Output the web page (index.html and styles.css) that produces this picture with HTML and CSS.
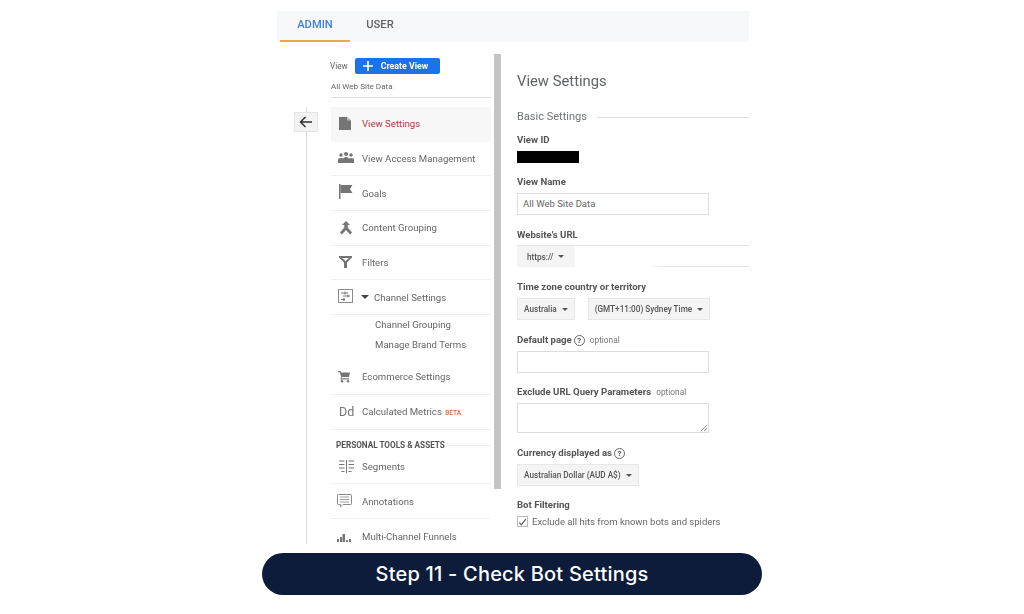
FILE: index.html
```html
<!DOCTYPE html>
<html lang="en">
<head>
<meta charset="utf-8">
<title>Step 11 - Check Bot Settings</title>
<link rel="stylesheet" href="styles.css">
</head>
<body>
<main class="page">
  <section class="shot">
    <header class="tabs">
      <div class="tab tab-active">ADMIN</div>
      <div class="tab">USER</div>
    </header>
    <div class="panes">
      <aside class="side">
        <div class="rail">
          <div class="back">
            <svg width="14" height="12" viewBox="0 0 14 12"><path d="M13 6H2M6.500 1 1.500 6l5 5" fill="none" stroke="#333" stroke-width="1.500"/></svg>
          </div>
        </div>
        <nav class="nav">
          <div class="view-head"><span>View</span><button class="create"><svg width="12" height="12" viewBox="0 0 12 12"><path d="M6 1v10M1 6h10" stroke="#fff" stroke-width="1.700"/></svg>Create View</button></div>
          <div class="view-name">All Web Site Data</div>
          <div class="row active">
            <svg class="ico" width="20" height="18" viewBox="0 0 20 18"><path d="M3 3h8l4 3.500V16H3z" fill="#757575"/><path d="M11 3v3.500h4z" fill="#bdbdbd"/></svg>
            <span>View Settings</span>
          </div>
          <div class="row">
            <svg class="ico" width="20" height="18" viewBox="0 0 20 18"><g fill="#757575"><circle cx="5" cy="6" r="1.700"/><circle cx="10" cy="5" r="2"/><circle cx="15" cy="6" r="1.700"/><path d="M2 14v-3q0-2 3-2t3 2v3zM7 14v-3.500q0-2.500 3-2.500t3 2.500V14zM12 14v-3q0-2 3-2t3 2v3z"/></g></svg>
            <span>View Access Management</span>
          </div>
          <div class="row">
            <svg class="ico" width="20" height="18" viewBox="0 0 20 18"><path d="M3 1h1.500v15H3z" fill="#757575"/><path d="M4.500 2h12L14 6l2.500 4h-12z" fill="#757575"/></svg>
            <span>Goals</span>
          </div>
          <div class="row">
            <svg class="ico" width="20" height="18" viewBox="0 0 20 18"><path d="M10 3 6 7h2.300v2.500L4 14.500 5.800 16.500l4.200-4.500 4.200 4.500 1.800-2-4.300-5V7H14z" fill="#757575"/></svg>
            <span>Content Grouping</span>
          </div>
          <div class="row">
            <svg class="ico" width="20" height="18" viewBox="0 0 20 18"><path d="M3 3h13v1.500l-5 5V15H8V9.500l-5-5z" fill="#757575"/><path d="M6 5h7L9.500 8z" fill="#fff"/></svg>
            <span>Filters</span>
          </div>
          <div class="row row-open">
            <svg class="ico" width="20" height="18" viewBox="0 0 20 18"><rect x="2.500" y="2.500" width="14" height="13" fill="#fff" stroke="#8a8a8a"/><path d="M5 6h7M7 9h7M5 12.500h4" stroke="#757575"/><path d="M9 4.500v3M12 7.500v3M8 11v3" stroke="#757575"/></svg>
            <span class="caret"></span>
            <span>Channel Settings</span>
          </div>
          <div class="subs">
            <div>Channel Grouping</div>
            <div>Manage Brand Terms</div>
          </div>
          <div class="row">
            <svg class="ico" width="20" height="18" viewBox="0 0 20 18"><path d="M2 4h2.500l.5 1.500h9l-1 4.500H6l-.5 1.200H13v1.300H4.300l.9-2.700-1.400-4.600H2z" fill="#757575"/><circle cx="6" cy="14.200" r="1.200" fill="#757575"/><circle cx="12" cy="14.200" r="1.200" fill="#757575"/></svg>
            <span>Ecommerce Settings</span>
          </div>
          <div class="row">
            <span class="dd">Dd</span>
            <span>Calculated Metrics <b class="beta">BETA</b></span>
          </div>
          <div class="group"><span>PERSONAL TOOLS &amp; ASSETS</span></div>
          <div class="row">
            <svg class="ico" width="20" height="18" viewBox="0 0 20 18"><path d="M10.500 3v13" stroke="#757575"/><path d="M3 4h5.500M3 7.500h5.500M3 11h5.500M5.500 14.500h3M12.500 4H18M12.500 7.500H18M12.500 11H18M12.500 14.500h3" stroke="#757575" stroke-width="1.100"/></svg>
            <span>Segments</span>
          </div>
          <div class="row">
            <svg class="ico" width="20" height="18" viewBox="0 0 20 18"><path d="M2.300 3.500h12.400a.8.8 0 0 1 .8.800v8.400a.8.8 0 0 1-.8.800H7l-2.500 2.500V13.500H2.300a.8.8 0 0 1-.8-.8V4.300a.8.8 0 0 1 .8-.8z" fill="#fff" stroke="#8a8a8a"/><path d="M4 6h9M4 8.500h9M4 11h9" stroke="#a0a0a0"/></svg>
            <span>Annotations</span>
          </div>
          <div class="row row-last">
            <svg class="ico ico-low" width="20" height="18" viewBox="0 0 20 18"><path d="M1 10h2v3H1zM4 8h2v5H4zM6.500 5h2.500v8H6.500zM10 11h2v2h-2zM13 10h2v3h-2z" fill="#757575"/></svg>
            <span>Multi-Channel Funnels</span>
          </div>
        </nav>
        <div class="scrollbar"></div>
      </aside>
      <div class="content">
        <h1>View Settings</h1>
        <div class="section"><span>Basic Settings</span></div>
        <div class="label label-id">View ID</div>
        <div class="redact"></div>
        <div class="label">View Name</div>
        <div class="input">All Web Site Data</div>
        <div class="label label-url">Website's URL</div>
        <div class="url">
          <div class="select">https:// <i class="arrow"></i></div>
        </div>
        <div class="label label-url">Time zone country or territory</div>
        <div class="selects">
          <div class="select">Australia <i class="arrow"></i></div>
          <div class="select">(GMT+11:00) Sydney Time <i class="arrow"></i></div>
        </div>
        <div class="label label-url">Default page <span class="help">?</span> <em>optional</em></div>
        <div class="input"></div>
        <div class="label">Exclude URL Query Parameters <em>optional</em></div>
        <div class="input area">
          <svg class="grip" width="8" height="8" viewBox="0 0 8 8"><path d="M1 7l6-6M4 7l3-3" stroke="#777" stroke-width=".8"/></svg>
        </div>
        <div class="label label-url">Currency displayed as <span class="help">?</span></div>
        <div class="selects">
          <div class="select">Australian Dollar (AUD A$) <i class="arrow"></i></div>
        </div>
        <div class="label label-bot">Bot Filtering</div>
        <div class="check">
          <span class="box"><svg width="11" height="11" viewBox="0 0 11 11"><path d="M1.500 5.500 4 8.500 9.500 1.500" fill="none" stroke="#555" stroke-width="1.400"/></svg></span>
          Exclude all hits from known bots and spiders
        </div>
      </div>
    </div>
  </section>
  <footer class="banner">Step 11 - Check Bot Settings</footer>
</main>
</body>
</html>
```

FILE: styles.css
```css
* { box-sizing: border-box; }
html, body { margin: 0; padding: 0; background: #fff; }
body { width: 1024px; height: 614px; overflow: hidden; font-family: Roboto, "Liberation Sans", sans-serif; color: #666; }
.page { display: flex; flex-direction: column; align-items: center; padding-top: 11px; }
.shot { width: 472px; height: 533px; overflow: hidden; display: flex; flex-direction: column; filter: blur(.45px); margin-left: 2px; }
.tabs { height: 31px; background: #f7f8fa; display: flex; flex: none; padding-left: 3px; }
.tab { font-size: 11.200px; line-height: 27px; color: #5f6368; font-weight: 500; width: 70px; text-align: center; }
.tab + .tab { width: 60px; }
.tab-active { color: #3f83d6; border-bottom: 2px solid #e8a93f; height: 31px; }
.panes { display: flex; flex: 1; min-height: 0; }
.side { width: 224px; flex: none; display: flex; position: relative; }
.rail { width: 30px; flex: none; border-right: 1px solid #ddd; height: 440px; margin-top: 65px; position: relative; }
.back { position: absolute; left: 17px; top: 5px; width: 24px; height: 20px; background: #f3f3f3; border: 1px solid #e4e4e4; display: flex; align-items: center; justify-content: center; }
.nav { width: 160px; margin-left: 24px; padding-top: 16px; flex: none; font-size: 9.600px; }
.view-head { display: flex; align-items: center; gap: 7px; font-size: 8.200px; height: 16px; margin-left: -1px; }
.create { width: 85px; height: 16px; background: #1a73e8; color: #fff; border: 0; border-radius: 2px; font: 700 8.800px Roboto, sans-serif; display: flex; align-items: center; justify-content: flex-start; gap: 7px; padding: 0 0 0 7px; }
.view-name { font-size: 8.100px; height: 19px; line-height: 15px; margin-top: 5px; margin-bottom: 9px; border-bottom: 1px solid #ddd; }
.row { height: 34.700px; display: flex; align-items: center; padding-left: 31px; position: relative; border-bottom: 1px solid #f0f0f0; }
.row .ico { position: absolute; left: 5px; top: 7px; }
.row .ico-low { top: 10px; }
.active { background: #f7f7f7; color: #a8414b; border-bottom-color: #f7f7f7; }
.row-open { padding-left: 30px; }
.caret { width: 0; height: 0; border: 4px solid transparent; border-top-color: #444; border-bottom: 0; margin-right: 5px; }
.subs { height: 45px; padding: 3px 0 0 44px; display: flex; flex-direction: column; gap: 6px; line-height: 14px; }
.dd { position: absolute; left: 8px; font-size: 12.500px; font-weight: 400; color: #757575; }
.beta { font-size: 6.500px; color: #c4703a; font-weight: 500; margin-left: 1px; }
.group { height: 20px; padding: 10px 0 0 5px; line-height: 10px; font-size: 8.200px; font-weight: 700; color: #555; position: relative; white-space: nowrap; }
.group::after { content: ""; position: absolute; left: 115px; right: 0; top: 15px; border-top: 1px solid #f0f0f0; }
.row-last { border: 0; }
.scrollbar { position: absolute; left: 217px; top: 12px; width: 7px; height: 435px; background: #c4c4c4; }
.content { flex: 1; padding: 30px 0 0 16px; font-size: 9px; min-width: 0; }
h1 { margin: 0; font-size: 14.800px; font-weight: 400; color: #5f6368; line-height: 19px; }
.section { margin-top: 19px; font-size: 11px; color: #6f7276; line-height: 14px; display: flex; align-items: center; gap: 10px; }
.section::after { content: ""; flex: 1; border-top: 1px solid #ddd; }
.label { font-size: 9.600px; font-weight: 700; color: #555; line-height: 12px; margin-top: 13px; white-space: nowrap; display: flex; align-items: center; gap: 2px; }
.label-id { margin-top: 10px; }
.label-url { margin-top: 14px; }
.label-bot { margin-top: 13px; }
.label em { font-style: normal; font-weight: 400; font-size: 8.300px; color: #777; margin-left: 3px; }
.help { width: 11px; height: 11px; border: 1px solid #666; border-radius: 50%; font-size: 8px; line-height: 9px; text-align: center; color: #555; }
.redact { width: 62px; height: 12px; background: #000; margin-top: 5px; margin-bottom: 1px; }
.input { width: 192px; height: 22px; border: 1px solid #ddd; background: #fff; margin-top: 5px; padding-left: 5px; font-size: 9.500px; line-height: 20px; color: #666; position: relative; }
.area { height: 30px; }
.grip { position: absolute; right: 0; bottom: 0; }
.url { height: 22px; margin-top: 4px; border-top: 1px solid #e4e4e4; background: linear-gradient(90deg, transparent 132px, #e4e4e4 150px) bottom / 100% 1px no-repeat; display: flex; }
.select { height: 22px; background: #f4f4f4; border: 1px solid #e8e8e8; padding: 0 6px; font-size: 8.200px; font-weight: 500; color: #555; line-height: 20px; white-space: nowrap; display: inline-flex; align-items: center; gap: 4px; }
.url .select { height: 21px; width: 58px; padding-left: 10px; border: 0; }
.arrow { width: 0; height: 0; border: 3px solid transparent; border-top-color: #555; border-bottom: 0; margin-left: 1px; }
.selects { display: flex; gap: 13px; margin-top: 5px; }
.check { display: flex; align-items: center; gap: 4px; font-size: 9.500px; color: #666; margin-top: 5px; white-space: nowrap; }
.box { width: 11px; height: 11px; border: 1px solid #bbb; display: flex; }
.banner { width: 500px; height: 42px; margin-top: 9px; border-radius: 21px; background: #0c1c3a; color: #fff; font: 500 20px Inter, sans-serif; display: flex; align-items: center; justify-content: center; letter-spacing: .2px; }
```
